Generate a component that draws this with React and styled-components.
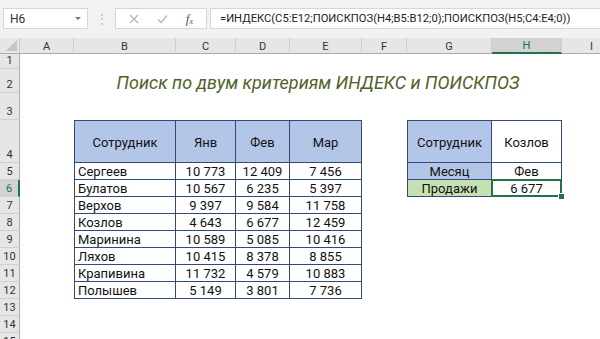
import React from 'react';
import styled, { createGlobalStyle, css } from 'styled-components';

const GlobalStyle = createGlobalStyle`
  html, body {
    margin: 0;
    padding: 0;
    background: #ffffff;
    overflow: hidden;
  }
  * {
    box-sizing: border-box;
  }
`;

const GREEN = '#217346';
const LINE = '#2f4b7c';
const BLUE = '#b4c6e7';
const LIGHT_GREEN = '#c6e0b4';

const Window = styled.div`
  width: 600px;
  height: 339px;
  overflow: hidden;
  background: #ffffff;
  font-family: Roboto, 'Liberation Sans', sans-serif;
`;

const FormulaBar = styled.div`
  height: 38px;
  background: #f2f2f2;
  display: flex;
  align-items: center;
  padding: 0 0 1px 3px;
`;

const NameBox = styled.div`
  width: 85px;
  height: 21px;
  background: #ffffff;
  border: 1px solid #d6d6d6;
  display: flex;
  align-items: center;
  justify-content: space-between;
  padding: 0 6px 0 6px;
  font-size: 12px;
  color: #333;
`;

const DropArrow = styled.span`
  width: 0;
  height: 0;
  border-left: 3px solid transparent;
  border-right: 3px solid transparent;
  border-top: 3px solid #777;
`;

const Grip = styled.div`
  width: 27px;
  display: flex;
  justify-content: center;
  color: #b8b8b8;
  font-size: 12px;
  letter-spacing: 0;
`;

const FnBox = styled.div`
  width: 92px;
  height: 21px;
  background: #ffffff;
  border: 1px solid #d6d6d6;
  display: flex;
  align-items: center;
  justify-content: space-around;
  padding: 0 4px;
`;

const Fx = styled.span`
  font-family: 'Liberation Serif', serif;
  font-style: italic;
  font-size: 13px;
  color: #555;
  sub {
    font-size: 8px;
    vertical-align: -1px;
  }
`;

const FormulaInput = styled.div`
  flex: 1;
  height: 21px;
  margin-left: 3px;
  background: #ffffff;
  border: 1px solid #d6d6d6;
  border-right: none;
  display: flex;
  align-items: center;
  padding-left: 9px;
  font-size: 11.2px;
  color: #222;
  white-space: nowrap;
  overflow: hidden;
`;

const Sheet = styled.div`
  display: grid;
  grid-template-columns: 20px 54px 102px 60px 54px 72px 45px 85px 70px 60px;
  grid-template-rows: 16px 15px 24px 27px 43px repeat(11, 17px);
`;

const Corner = styled.div`
  grid-column: 1;
  grid-row: 1;
  background: #e6e6e6;
  border-right: 1px solid #c8c8c8;
  border-bottom: 1px solid #ababab;
  display: flex;
  align-items: flex-end;
  justify-content: flex-end;
  padding: 0 2px 2px 0;
`;

const ColHeader = styled.div`
  grid-column: ${(p) => p.$c};
  grid-row: 1;
  background: ${(p) => (p.$active ? '#d2d2d2' : '#e6e6e6')};
  border-right: 1px solid #cfcfcf;
  border-bottom: ${(p) => (p.$active ? `2px solid ${GREEN}` : '1px solid #ababab')};
  color: ${(p) => (p.$active ? GREEN : '#333')};
  font-size: 11px;
  display: flex;
  align-items: center;
  justify-content: center;
  padding-top: 1px;
`;

const RowHeader = styled.div`
  grid-column: 1;
  grid-row: ${(p) => p.$r};
  background: ${(p) => (p.$active ? '#d2d2d2' : '#e6e6e6')};
  border-bottom: 1px solid #d0d0d0;
  border-right: ${(p) => (p.$active ? `2px solid ${GREEN}` : '1px solid #ababab')};
  color: ${(p) => (p.$active ? GREEN : '#333')};
  font-size: 11px;
  display: flex;
  align-items: flex-end;
  justify-content: center;
  padding-bottom: 1px;
`;

const Title = styled.div`
  grid-column: 3 / 10;
  grid-row: 3;
  display: flex;
  align-items: center;
  justify-content: center;
  font-style: italic;
  font-size: 18px;
  color: #4f6228;
  padding-top: 2px;
`;

const Cell = styled.div`
  grid-column: ${(p) => p.$c};
  grid-row: ${(p) => p.$r};
  background: ${(p) => p.$bg || '#ffffff'};
  border-right: 1px solid ${LINE};
  border-bottom: 1px solid ${LINE};
  ${(p) => p.$first && css`border-left: 1px solid ${LINE};`}
  ${(p) => p.$top && css`border-top: 1px solid ${LINE};`}
  display: flex;
  align-items: center;
  justify-content: ${(p) => (p.$left ? 'flex-start' : 'center')};
  padding: ${(p) => (p.$left ? '1px 0 0 3px' : '1px 0 0 0')};
  font-size: 13px;
  color: #111;
  white-space: nowrap;
  position: relative;
  ${(p) =>
    p.$selected &&
    css`
      &::after {
        content: '';
        position: absolute;
        left: -1px;
        top: -1px;
        right: -1px;
        bottom: -1px;
        border: 2px solid ${GREEN};
        z-index: 2;
      }
      &::before {
        content: '';
        position: absolute;
        right: -4px;
        bottom: -4px;
        width: 5px;
        height: 5px;
        background: ${GREEN};
        border: 1px solid #ffffff;
        z-index: 3;
      }
    `}
`;

const columns = ['A', 'B', 'C', 'D', 'E', 'F', 'G', 'H', 'I'];

const sales = [
  ['Сергеев', '10 773', '12 409', '7 456'],
  ['Булатов', '10 567', '6 235', '5 397'],
  ['Верхов', '9 397', '9 584', '11 758'],
  ['Козлов', '4 643', '6 677', '12 459'],
  ['Маринина', '10 589', '5 085', '10 416'],
  ['Ляхов', '10 415', '8 378', '8 855'],
  ['Крапивина', '11 732', '4 579', '10 883'],
  ['Полышев', '5 149', '3 801', '7 736'],
];

const nb = (s) => s.replace(/ /g, '\u00a0');

const CrossIcon = () => (
  <svg width="10" height="10" viewBox="0 0 10 10">
    <path d="M1 1 L9 9 M9 1 L1 9" stroke="#b5b5b5" strokeWidth="1.2" fill="none" />
  </svg>
);

const CheckIcon = () => (
  <svg width="11" height="10" viewBox="0 0 11 10">
    <path d="M1 5.5 L4 8.5 L10 1.5" stroke="#b5b5b5" strokeWidth="1.2" fill="none" />
  </svg>
);

const SelectAll = () => (
  <svg width="11" height="11" viewBox="0 0 11 11">
    <polygon points="11,0 11,11 0,11" fill="#c4c4c4" />
  </svg>
);

export default function App() {
  return (
    <Window>
      <GlobalStyle />
      <FormulaBar>
        <NameBox>
          H6
          <DropArrow />
        </NameBox>
        <Grip>⋮</Grip>
        <FnBox>
          <CrossIcon />
          <CheckIcon />
          <Fx>
            f<sub>x</sub>
          </Fx>
        </FnBox>
        <FormulaInput>=ИНДЕКС(C5:E12;ПОИСКПОЗ(H4;B5:B12;0);ПОИСКПОЗ(H5;C4:E4;0))</FormulaInput>
      </FormulaBar>

      <Sheet>
        <Corner>
          <SelectAll />
        </Corner>
        {columns.map((c, i) => (
          <ColHeader key={c} $c={i + 2} $active={c === 'H'}>
            {c}
          </ColHeader>
        ))}
        {Array.from({ length: 15 }, (_, i) => (
          <RowHeader key={i} $r={i + 2} $active={i + 1 === 6}>
            {i + 1}
          </RowHeader>
        ))}

        <Title>Поиск по двум критериям ИНДЕКС и ПОИСКПОЗ</Title>

        {['Сотрудник', 'Янв', 'Фев', 'Мар'].map((h, i) => (
          <Cell key={h} $c={i + 3} $r={5} $bg={BLUE} $top $first={i === 0}>
            {h}
          </Cell>
        ))}
        {sales.map((row, r) =>
          row.map((v, c) => (
            <Cell key={`${r}-${c}`} $c={c + 3} $r={r + 6} $first={c === 0} $left={c === 0}>
              {nb(v)}
            </Cell>
          ))
        )}

        <Cell $c={8} $r={5} $bg={BLUE} $top $first>
          Сотрудник
        </Cell>
        <Cell $c={9} $r={5} $top>
          Козлов
        </Cell>
        <Cell $c={8} $r={6} $bg={BLUE} $first>
          Месяц
        </Cell>
        <Cell $c={9} $r={6}>
          Фев
        </Cell>
        <Cell $c={8} $r={7} $bg={LIGHT_GREEN} $first>
          Продажи
        </Cell>
        <Cell $c={9} $r={7} $selected>
          {nb('6 677')}
        </Cell>
      </Sheet>
    </Window>
  );
}
